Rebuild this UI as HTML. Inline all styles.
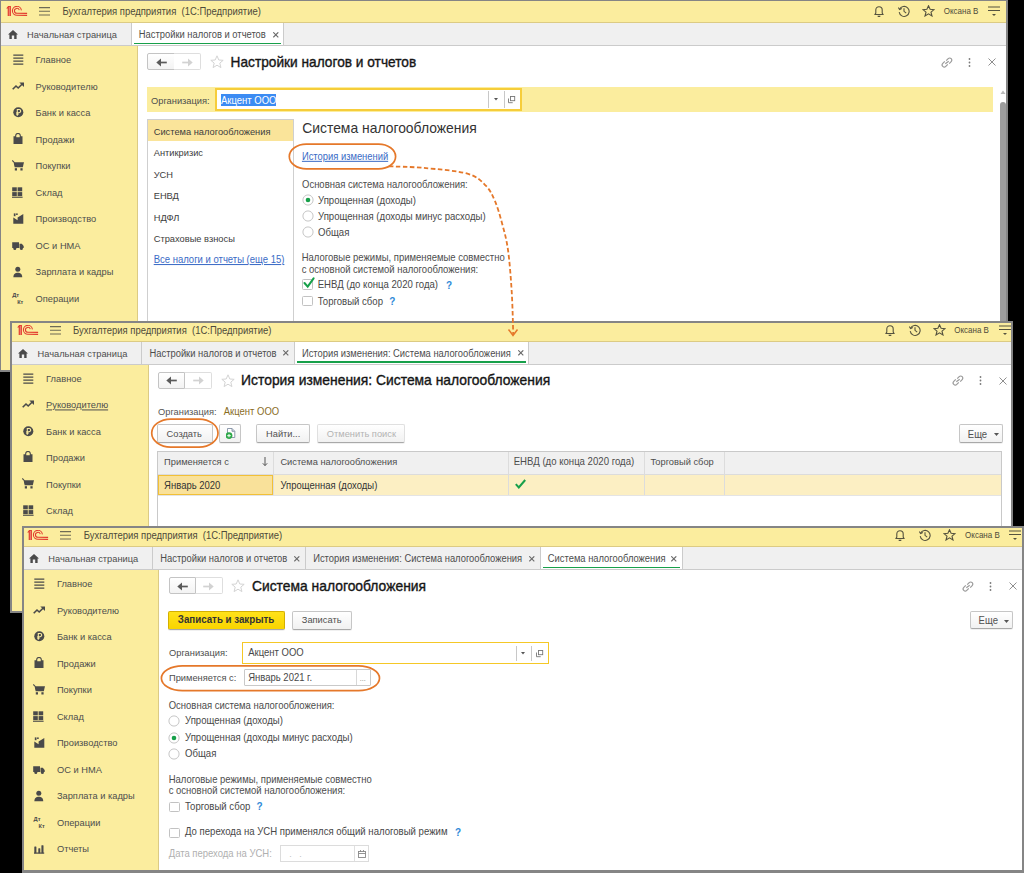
<!DOCTYPE html>
<html><head><meta charset="utf-8"><title>1C</title>
<style>
html,body{margin:0;padding:0;background:#000;width:1024px;height:873px;overflow:hidden;}
body{position:relative;font-family:"Liberation Sans", sans-serif;}
.win{position:absolute;overflow:hidden;background:#fff;}
.win div,.win svg,body>svg{position:absolute;}
.t{white-space:nowrap;}
</style></head><body>
<div class="win" style="left:0px;top:0px;width:1008px;height:372px"><div style="left:-50.00px;top:-50.00px;width:1200.00px;height:1000.00px;background:#fff"></div><div style="left:-50.00px;top:-50.00px;width:1200.00px;height:72.00px;background:#fbed9e"></div><div style="left:-50.00px;top:22.00px;width:1200.00px;height:1.00px;background:#dccb84"></div><div style="left:-50.00px;top:23.00px;width:1200.00px;height:22.00px;background:#f0f0f0"></div><div style="left:-50.00px;top:45.00px;width:1200.00px;height:1.00px;background:#cbcbcb"></div><div style="left:-50.00px;top:46.00px;width:187.00px;height:1000.00px;background:#fbed9e"></div><div style="left:137.00px;top:46.00px;width:1.00px;height:1000.00px;background:#dccb84"></div><svg style="left:6.00px;top:6.00px" width="22" height="11" viewBox="0 0 22 11"><path fill="#e2392d" d="M0.2 2.4 L2.1 0 L4.9 0 L4.9 9.9 L1.7 9.9 L1.7 2.6 Z"/><path stroke="#f6b49a" stroke-width="0.7" d="M3.3 0.9 V9.9"/><g fill="none" stroke="#e2392d" stroke-width="1.05"><path d="M15.4 4.35 A4.5 4.5 0 1 0 10.9 9.35 L21.1 9.35"/><path d="M13.3 4.05 A2.5 2.5 0 1 0 10.9 7.35 L21.1 7.35"/></g></svg><svg style="left:39.00px;top:7.00px" width="11" height="9" viewBox="0 0 11 9"><g stroke="#6e6b55" stroke-width="1.1"><path d="M0 0.6H11M0 4.3H11M0 8H11"/></g></svg><svg style="left:873.00px;top:5.00px" width="12" height="12" viewBox="0 0 12 12"><g fill="none" stroke="#55533f" stroke-width="1.1"><path d="M2 9.5 L2.8 8 L2.8 5 A3.2 3.2 0 0 1 9.2 5 L9.2 8 L10 9.5 Z"/><path d="M4.8 10.8 A1.3 1.3 0 0 0 7.2 10.8"/></g></svg><svg style="left:898.00px;top:5.00px" width="12" height="12" viewBox="0 0 12 12"><g fill="none" stroke="#55533f" stroke-width="1.1"><path d="M1.6 4.3 A5 5 0 1 1 1.2 7.2"/><path d="M6 3.2 V6.3 L8.2 8.2"/><path d="M0.3 2.5 L1.6 4.6 L3.8 3.6"/></g></svg><svg style="left:922.00px;top:5.00px" width="13" height="12" viewBox="0 0 13 12"><path fill="none" stroke="#55533f" stroke-width="1.1" d="M6.5 0.8 L8.1 4.3 L12 4.6 L9 7.1 L10 11 L6.5 8.9 L3 11 L4 7.1 L1 4.6 L4.9 4.3 Z"/></svg><svg style="left:988.00px;top:5.00px" width="12" height="12" viewBox="0 0 12 12"><g stroke="#55533f" stroke-width="1.1"><path d="M0 2H12M0 5.5H12"/></g><path fill="#55533f" d="M4 9 H8 L6 11 Z"/></svg><svg style="left:7.80px;top:30.00px" width="10" height="9" viewBox="0 0 10 9"><path fill="#4a4a4a" d="M5 0 L10 4.6 L8.6 4.6 L8.6 9 L6.2 9 L6.2 5.6 L3.8 5.6 L3.8 9 L1.4 9 L1.4 4.6 L0 4.6 Z"/></svg><div style="left:132.00px;top:23.00px;width:151.00px;height:22.00px;background:#fff"></div><div style="left:134.00px;top:42.60px;width:147.00px;height:1.60px;background:#17a04a"></div><div style="left:131.00px;top:23.00px;width:1.00px;height:22.00px;background:#cbcbcb"></div><div style="left:283.00px;top:23.00px;width:1.00px;height:22.00px;background:#cbcbcb"></div><svg style="left:272.50px;top:31.90px" width="6" height="6" viewBox="0 0 6 6"><path stroke="#6a6a6a" stroke-width="1.1" d="M0.3 0.3 L5.3 5.3 M5.3 0.3 L0.3 5.3"/></svg><svg style="left:12.50px;top:54.00px" width="11" height="11" viewBox="0 0 11 11"><g stroke="#4a4a4a" stroke-width="1.25"><path d="M0.3 1.2H10.3M0.3 4.1H10.3M0.3 7.1H10.3M0.3 10.1H10.3"/></g></svg><svg style="left:11.80px;top:81.50px" width="13" height="9" viewBox="0 0 13 9"><path fill="none" stroke="#4a4a4a" stroke-width="1.6" d="M0.7 7.3 L4 4 L6.2 6 L10 2.3"/><path fill="#4a4a4a" d="M7.3 0.4 L12 0.4 L12 5.1 Z"/></svg><svg style="left:12.50px;top:107.40px" width="11" height="11" viewBox="0 0 11 11"><circle cx="5.3" cy="5.3" r="5" fill="#4a4a4a"/><path fill="none" stroke="#fbed9e" stroke-width="1.1" d="M4.3 8.8 V2.5 H6.1 A1.6 1.6 0 0 1 6.1 5.7 H3.2 M3.2 7.1 H5.6"/></svg><svg style="left:12.70px;top:132.90px" width="10" height="12" viewBox="0 0 10 12"><path fill="#4a4a4a" d="M0.5 3.3 H2.6 L3.3 4.3 H6.7 L7.4 3.3 H9.5 V11 H0.5 Z"/><path fill="none" stroke="#4a4a4a" stroke-width="1.1" d="M2.7 4.6 V2.6 A2.3 2.2 0 0 1 7.3 2.6 V4.6"/></svg><svg style="left:11.70px;top:159.90px" width="13" height="11" viewBox="0 0 13 11"><path fill="#4a4a4a" d="M2 2.2 H12 L10.8 7.2 H3.2 Z"/><path fill="none" stroke="#4a4a4a" stroke-width="1.1" d="M0.3 0.5 L2.2 2.4 L3.2 7.2"/><rect x="2.8" y="8.2" width="2.2" height="2.3" fill="#4a4a4a"/><rect x="8.4" y="8.2" width="2.2" height="2.3" fill="#4a4a4a"/></svg><svg style="left:12.10px;top:186.60px" width="11" height="11" viewBox="0 0 11 11"><g fill="#4a4a4a"><rect x="0.2" y="0.3" width="4.6" height="4"/><rect x="5.6" y="0.3" width="4.6" height="4"/><rect x="0.2" y="5.1" width="4.6" height="4"/><rect x="5.6" y="5.1" width="4.6" height="4"/><rect x="0" y="9.7" width="10.6" height="1.1"/></g></svg><svg style="left:12.50px;top:213.00px" width="11" height="11" viewBox="0 0 11 11"><path fill="#4a4a4a" d="M0.3 10.7 V4.6 L4.6 7.3 V4.6 L10.3 1 V10.7 Z"/><rect x="0.8" y="0.4" width="1.7" height="2.8" fill="#4a4a4a"/><rect x="3.1" y="0.4" width="1.6" height="1.6" fill="#4a4a4a"/></svg><svg style="left:12.00px;top:241.50px" width="12" height="9" viewBox="0 0 12 9"><path fill="#4a4a4a" d="M0.2 0.2 H7 V6 H0.2 Z M7.5 1.8 H9.8 L11.7 4 V6 H7.5 Z"/><circle cx="2.8" cy="6.6" r="1.5" fill="#4a4a4a"/><circle cx="9.4" cy="6.6" r="1.5" fill="#4a4a4a"/></svg><svg style="left:13.00px;top:266.00px" width="10" height="12" viewBox="0 0 10 12"><circle cx="4.8" cy="3.2" r="2.5" fill="#4a4a4a"/><path fill="#4a4a4a" d="M0.4 11.3 C0.4 7.8 2.5 6.8 4.8 6.8 C7.1 6.8 9.2 7.8 9.2 11.3 Z"/></svg><div style="left:147.30px;top:53.30px;width:27.50px;height:17.20px;background:linear-gradient(#fff,#f3f3f3);border:1px solid #c4c4c4;box-sizing:border-box;border-radius:2px 0 0 2px"></div><div style="left:174.30px;top:53.30px;width:27.10px;height:17.20px;background:#fff;border:1px solid #dedede;border-left:none;box-sizing:border-box;border-radius:0 2px 2px 0"></div><svg style="left:155.50px;top:57.50px" width="11" height="9" viewBox="0 0 11 9"><path fill="none" stroke="#5a5a5a" stroke-width="1.7" d="M10.8 4.5 H2.5"/><path fill="#5a5a5a" d="M0.3 4.5 L5 0.6 L5 8.4 Z"/></svg><svg style="left:182.00px;top:57.50px" width="11" height="9" viewBox="0 0 11 9"><path fill="none" stroke="#d2d2d2" stroke-width="1.7" d="M0.2 4.5 H8.5"/><path fill="#d2d2d2" d="M10.7 4.5 L6 0.6 L6 8.4 Z"/></svg><svg style="left:210.00px;top:55.00px" width="14" height="14" viewBox="0 0 14 14"><path fill="none" stroke="#d4d4d4" stroke-width="1" d="M7 0.8 L8.8 5 L13.2 5.3 L9.8 8.1 L10.9 12.6 L7 10.2 L3.1 12.6 L4.2 8.1 L0.8 5.3 L5.2 5 Z"/></svg><svg style="left:941.00px;top:56.50px" width="12" height="11" viewBox="0 0 12 11"><g fill="none" stroke="#9a9a9a" stroke-width="1.2"><path d="M5.2 3.6 L7.2 1.6 A2 2 0 0 1 10.2 4.6 L8.2 6.6"/><path d="M6.8 7.4 L4.8 9.4 A2 2 0 0 1 1.8 6.4 L3.8 4.4"/><path d="M4.3 6.8 L7.7 4.2"/></g></svg><svg style="left:968.00px;top:57.50px" width="3" height="9" viewBox="0 0 3 9"><g fill="#7a7a7a"><circle cx="1.5" cy="1" r="0.9"/><circle cx="1.5" cy="4.5" r="0.9"/><circle cx="1.5" cy="8" r="0.9"/></g></svg><svg style="left:988.00px;top:58.00px" width="8" height="8" viewBox="0 0 8 8"><path stroke="#8f8f8f" stroke-width="1" d="M0.5 0.5 L7.5 7.5 M7.5 0.5 L0.5 7.5"/></svg><svg style="left:1000.00px;top:90.00px" width="6" height="5" viewBox="0 0 6 5"><path fill="#bbb" d="M3 0.5 L5.5 4 H0.5 Z"/></svg><div style="left:999.50px;top:101.50px;width:6.50px;height:400.00px;background:#9c9c9c;border-radius:3px"></div><div style="left:147.00px;top:87.00px;width:845.50px;height:25.00px;background:#fbed9e"></div><div style="left:215.00px;top:87.50px;width:307.00px;height:23.80px;background:#fff;border:2.2px solid #f6cd3a;box-sizing:border-box"></div><div style="left:220.60px;top:94.20px;width:55.60px;height:11.80px;background:#3b8bf3"></div><div style="left:488.00px;top:91.00px;width:1.00px;height:17.00px;background:#c8c8c8"></div><div style="left:503.50px;top:91.00px;width:1.00px;height:17.00px;background:#c8c8c8"></div><svg style="left:493.50px;top:98.30px" width="4" height="3" viewBox="0 0 4 3"><path fill="#555" d="M0 0 H4 L2 2.5 Z"/></svg><svg style="left:508.00px;top:96.00px" width="8" height="8" viewBox="0 0 8 8"><g fill="none" stroke="#777" stroke-width="0.9"><rect x="2.5" y="0.5" width="4.2" height="4.2"/><path d="M0.5 2.5 V6.7 H4.7"/></g></svg><div style="left:147.30px;top:119.30px;width:146.50px;height:400.00px;border:1px solid #cfcfcf;box-sizing:border-box;background:#fff"></div><div style="left:148.30px;top:120.30px;width:144.50px;height:21.00px;background:#fae49a"></div><svg style="left:301.50px;top:193.80px" width="12" height="12" viewBox="0 0 12 12"><circle cx="6" cy="6" r="5.1" fill="#fff" stroke="#c6c6c6" stroke-width="1"/><circle cx="6" cy="6" r="2.3" fill="#17a04a"/></svg><svg style="left:301.50px;top:210.10px" width="12" height="12" viewBox="0 0 12 12"><circle cx="6" cy="6" r="5.1" fill="#fff" stroke="#c6c6c6" stroke-width="1"/></svg><svg style="left:301.50px;top:226.40px" width="12" height="12" viewBox="0 0 12 12"><circle cx="6" cy="6" r="5.1" fill="#fff" stroke="#c6c6c6" stroke-width="1"/></svg><div style="left:302.30px;top:279.30px;width:10.50px;height:10.50px;border:1px solid #c2c2c2;box-sizing:border-box;border-radius:1.5px;background:#fff"></div><svg style="left:301.80px;top:277.30px" width="14" height="13" viewBox="0 0 14 13"><path fill="none" stroke="#17a04a" stroke-width="2" stroke-linecap="round" d="M2.5 6 L5.7 9.6 L11.6 1.3"/></svg><div style="left:302.30px;top:295.70px;width:10.50px;height:10.50px;border:1px solid #c2c2c2;box-sizing:border-box;border-radius:1.5px;background:#fff"></div><svg width="1008" height="372" font-family="Liberation Sans, sans-serif" xml:space="preserve" style="left:0;top:0;white-space:pre"><text transform="translate(62.50,15.20) scale(0.9346,1)" font-size="10.14" fill="#4d4a3a" font-weight="normal">Бухгалтерия предприятия &#160;(1С:Предприятие)</text><text transform="translate(943.80,14.00) scale(0.9346,1)" font-size="8.56" fill="#4d4a3a" font-weight="normal">Оксана В</text><text transform="translate(27.00,38.30) scale(0.9346,1)" font-size="9.95" fill="#4d4d4d" font-weight="normal">Начальная страница</text><text transform="translate(138.80,38.30) scale(0.9346,1)" font-size="10.04" fill="#4d4d4d" font-weight="normal">Настройки налогов и отчетов</text><text transform="translate(35.60,63.40) scale(0.9346,1)" font-size="9.95" fill="#4d4d4d" font-weight="normal">Главное</text><text transform="translate(35.60,89.90) scale(0.9346,1)" font-size="9.95" fill="#4d4d4d" font-weight="normal">Руководителю</text><text transform="translate(35.60,116.40) scale(0.9346,1)" font-size="9.95" fill="#4d4d4d" font-weight="normal">Банк и касса</text><text transform="translate(35.60,142.90) scale(0.9346,1)" font-size="9.95" fill="#4d4d4d" font-weight="normal">Продажи</text><text transform="translate(35.60,169.40) scale(0.9346,1)" font-size="9.95" fill="#4d4d4d" font-weight="normal">Покупки</text><text transform="translate(35.60,195.90) scale(0.9346,1)" font-size="9.95" fill="#4d4d4d" font-weight="normal">Склад</text><text transform="translate(35.60,222.40) scale(0.9346,1)" font-size="9.95" fill="#4d4d4d" font-weight="normal">Производство</text><text transform="translate(35.60,248.90) scale(0.9346,1)" font-size="9.95" fill="#4d4d4d" font-weight="normal">ОС и НМА</text><text transform="translate(35.60,275.40) scale(0.9346,1)" font-size="9.95" fill="#4d4d4d" font-weight="normal">Зарплата и кадры</text><text transform="translate(35.60,301.90) scale(0.9346,1)" font-size="9.95" fill="#4d4d4d" font-weight="normal">Операции</text><text transform="translate(12.20,297.30) scale(0.9346,1)" font-size="6.21" fill="#4a4a4a" font-weight="bold">Дт</text><text transform="translate(17.20,303.80) scale(0.9346,1)" font-size="5.99" fill="#4a4a4a" font-weight="bold">Кт</text><text transform="translate(230.60,66.80) scale(0.9804,1)" font-size="13.97" fill="#151515" font-weight="normal" stroke="#151515" stroke-width="0.35">Настройки налогов и отчетов</text><text transform="translate(151.00,103.50) scale(0.9346,1)" font-size="9.95" fill="#4d4d4d" font-weight="normal">Организация:</text><text transform="translate(221.00,103.80) scale(0.9346,1)" font-size="10.17" fill="#fff" font-weight="normal">Акцент ООО</text><text transform="translate(153.70,134.70) scale(0.9346,1)" font-size="9.95" fill="#3d3d3d" font-weight="normal">Система налогообложения</text><text transform="translate(153.70,156.20) scale(0.9346,1)" font-size="9.95" fill="#3d3d3d" font-weight="normal">Антикризис</text><text transform="translate(153.70,177.70) scale(0.9346,1)" font-size="9.95" fill="#3d3d3d" font-weight="normal">УСН</text><text transform="translate(153.70,199.20) scale(0.9346,1)" font-size="9.95" fill="#3d3d3d" font-weight="normal">ЕНВД</text><text transform="translate(153.70,220.70) scale(0.9346,1)" font-size="9.95" fill="#3d3d3d" font-weight="normal">НДФЛ</text><text transform="translate(153.70,242.20) scale(0.9346,1)" font-size="9.95" fill="#3d3d3d" font-weight="normal">Страховые взносы</text><text transform="translate(153.70,263.00) scale(0.9346,1)" font-size="10.17" fill="#3a6bc6" font-weight="normal" text-decoration="underline">Все налоги и отчеты (еще 15)</text><text transform="translate(302.20,132.80) scale(1.0000,1)" font-size="13.90" fill="#333" font-weight="normal">Система налогообложения</text><text transform="translate(301.90,159.80) scale(0.9346,1)" font-size="10.06" fill="#3a6bc6" font-weight="normal" text-decoration="underline">История изменений</text><text transform="translate(302.00,188.20) scale(0.9346,1)" font-size="10.17" fill="#4d4d4d" font-weight="normal">Основная система налогообложения:</text><text transform="translate(318.00,203.60) scale(0.9346,1)" font-size="10.27" fill="#484848" font-weight="normal">Упрощенная (доходы)</text><text transform="translate(318.00,219.90) scale(0.9346,1)" font-size="10.27" fill="#484848" font-weight="normal">Упрощенная (доходы минус расходы)</text><text transform="translate(318.00,236.20) scale(0.9346,1)" font-size="10.27" fill="#484848" font-weight="normal">Общая</text><text transform="translate(301.70,261.10) scale(0.9346,1)" font-size="10.17" fill="#4d4d4d" font-weight="normal">Налоговые режимы, применяемые совместно</text><text transform="translate(301.70,272.90) scale(0.9346,1)" font-size="10.17" fill="#4d4d4d" font-weight="normal">с основной системой налогообложения:</text><text transform="translate(317.70,288.10) scale(0.9346,1)" font-size="10.27" fill="#484848" font-weight="normal">ЕНВД (до конца 2020 года)</text><text transform="translate(446.00,288.50) scale(0.9346,1)" font-size="10.70" fill="#2f8ad8" font-weight="bold">?</text><text transform="translate(317.70,304.50) scale(0.9346,1)" font-size="10.27" fill="#484848" font-weight="normal">Торговый сбор</text><text transform="translate(389.30,304.80) scale(0.9346,1)" font-size="10.70" fill="#2f8ad8" font-weight="bold">?</text></svg><div style="left:0;top:0;width:1008px;height:372px;box-sizing:border-box;border-style:solid;border-color:#858585;border-width:1.5px 2px 2px 1px"></div></div><div class="win" style="left:10px;top:321px;width:1003px;height:292px"><div style="left:-49.50px;top:-52.50px;width:1200.00px;height:1000.00px;background:#fff"></div><div style="left:-49.50px;top:-52.50px;width:1200.00px;height:72.00px;background:#fbed9e"></div><div style="left:-49.50px;top:19.50px;width:1200.00px;height:1.00px;background:#dccb84"></div><div style="left:-49.50px;top:20.50px;width:1200.00px;height:22.00px;background:#f0f0f0"></div><div style="left:-49.50px;top:42.50px;width:1200.00px;height:1.00px;background:#cbcbcb"></div><div style="left:-49.50px;top:43.50px;width:187.00px;height:1000.00px;background:#fbed9e"></div><div style="left:137.50px;top:43.50px;width:1.00px;height:1000.00px;background:#dccb84"></div><svg style="left:6.50px;top:3.50px" width="22" height="11" viewBox="0 0 22 11"><path fill="#e2392d" d="M0.2 2.4 L2.1 0 L4.9 0 L4.9 9.9 L1.7 9.9 L1.7 2.6 Z"/><path stroke="#f6b49a" stroke-width="0.7" d="M3.3 0.9 V9.9"/><g fill="none" stroke="#e2392d" stroke-width="1.05"><path d="M15.4 4.35 A4.5 4.5 0 1 0 10.9 9.35 L21.1 9.35"/><path d="M13.3 4.05 A2.5 2.5 0 1 0 10.9 7.35 L21.1 7.35"/></g></svg><svg style="left:39.50px;top:4.50px" width="11" height="9" viewBox="0 0 11 9"><g stroke="#6e6b55" stroke-width="1.1"><path d="M0 0.6H11M0 4.3H11M0 8H11"/></g></svg><svg style="left:873.50px;top:2.50px" width="12" height="12" viewBox="0 0 12 12"><g fill="none" stroke="#55533f" stroke-width="1.1"><path d="M2 9.5 L2.8 8 L2.8 5 A3.2 3.2 0 0 1 9.2 5 L9.2 8 L10 9.5 Z"/><path d="M4.8 10.8 A1.3 1.3 0 0 0 7.2 10.8"/></g></svg><svg style="left:898.50px;top:2.50px" width="12" height="12" viewBox="0 0 12 12"><g fill="none" stroke="#55533f" stroke-width="1.1"><path d="M1.6 4.3 A5 5 0 1 1 1.2 7.2"/><path d="M6 3.2 V6.3 L8.2 8.2"/><path d="M0.3 2.5 L1.6 4.6 L3.8 3.6"/></g></svg><svg style="left:922.50px;top:2.50px" width="13" height="12" viewBox="0 0 13 12"><path fill="none" stroke="#55533f" stroke-width="1.1" d="M6.5 0.8 L8.1 4.3 L12 4.6 L9 7.1 L10 11 L6.5 8.9 L3 11 L4 7.1 L1 4.6 L4.9 4.3 Z"/></svg><svg style="left:988.50px;top:2.50px" width="12" height="12" viewBox="0 0 12 12"><g stroke="#55533f" stroke-width="1.1"><path d="M0 2H12M0 5.5H12"/></g><path fill="#55533f" d="M4 9 H8 L6 11 Z"/></svg><svg style="left:8.30px;top:27.50px" width="10" height="9" viewBox="0 0 10 9"><path fill="#4a4a4a" d="M5 0 L10 4.6 L8.6 4.6 L8.6 9 L6.2 9 L6.2 5.6 L3.8 5.6 L3.8 9 L1.4 9 L1.4 4.6 L0 4.6 Z"/></svg><div style="left:130.70px;top:20.50px;width:1.00px;height:22.00px;background:#cbcbcb"></div><div style="left:284.00px;top:20.50px;width:1.00px;height:22.00px;background:#cbcbcb"></div><svg style="left:273.30px;top:29.40px" width="6" height="6" viewBox="0 0 6 6"><path stroke="#6a6a6a" stroke-width="1.1" d="M0.3 0.3 L5.3 5.3 M5.3 0.3 L0.3 5.3"/></svg><div style="left:284.50px;top:20.50px;width:233.60px;height:22.00px;background:#fff"></div><div style="left:286.50px;top:40.10px;width:229.60px;height:1.60px;background:#17a04a"></div><div style="left:283.50px;top:20.50px;width:1.00px;height:22.00px;background:#cbcbcb"></div><div style="left:518.10px;top:20.50px;width:1.00px;height:22.00px;background:#cbcbcb"></div><svg style="left:508.00px;top:29.40px" width="6" height="6" viewBox="0 0 6 6"><path stroke="#6a6a6a" stroke-width="1.1" d="M0.3 0.3 L5.3 5.3 M5.3 0.3 L0.3 5.3"/></svg><svg style="left:13.00px;top:51.50px" width="11" height="11" viewBox="0 0 11 11"><g stroke="#4a4a4a" stroke-width="1.25"><path d="M0.3 1.2H10.3M0.3 4.1H10.3M0.3 7.1H10.3M0.3 10.1H10.3"/></g></svg><svg style="left:12.30px;top:79.00px" width="13" height="9" viewBox="0 0 13 9"><path fill="none" stroke="#4a4a4a" stroke-width="1.6" d="M0.7 7.3 L4 4 L6.2 6 L10 2.3"/><path fill="#4a4a4a" d="M7.3 0.4 L12 0.4 L12 5.1 Z"/></svg><svg style="left:13.00px;top:104.90px" width="11" height="11" viewBox="0 0 11 11"><circle cx="5.3" cy="5.3" r="5" fill="#4a4a4a"/><path fill="none" stroke="#fbed9e" stroke-width="1.1" d="M4.3 8.8 V2.5 H6.1 A1.6 1.6 0 0 1 6.1 5.7 H3.2 M3.2 7.1 H5.6"/></svg><svg style="left:13.20px;top:130.40px" width="10" height="12" viewBox="0 0 10 12"><path fill="#4a4a4a" d="M0.5 3.3 H2.6 L3.3 4.3 H6.7 L7.4 3.3 H9.5 V11 H0.5 Z"/><path fill="none" stroke="#4a4a4a" stroke-width="1.1" d="M2.7 4.6 V2.6 A2.3 2.2 0 0 1 7.3 2.6 V4.6"/></svg><svg style="left:12.20px;top:157.40px" width="13" height="11" viewBox="0 0 13 11"><path fill="#4a4a4a" d="M2 2.2 H12 L10.8 7.2 H3.2 Z"/><path fill="none" stroke="#4a4a4a" stroke-width="1.1" d="M0.3 0.5 L2.2 2.4 L3.2 7.2"/><rect x="2.8" y="8.2" width="2.2" height="2.3" fill="#4a4a4a"/><rect x="8.4" y="8.2" width="2.2" height="2.3" fill="#4a4a4a"/></svg><svg style="left:12.60px;top:184.10px" width="11" height="11" viewBox="0 0 11 11"><g fill="#4a4a4a"><rect x="0.2" y="0.3" width="4.6" height="4"/><rect x="5.6" y="0.3" width="4.6" height="4"/><rect x="0.2" y="5.1" width="4.6" height="4"/><rect x="5.6" y="5.1" width="4.6" height="4"/><rect x="0" y="9.7" width="10.6" height="1.1"/></g></svg><svg style="left:13.00px;top:210.50px" width="11" height="11" viewBox="0 0 11 11"><path fill="#4a4a4a" d="M0.3 10.7 V4.6 L4.6 7.3 V4.6 L10.3 1 V10.7 Z"/><rect x="0.8" y="0.4" width="1.7" height="2.8" fill="#4a4a4a"/><rect x="3.1" y="0.4" width="1.6" height="1.6" fill="#4a4a4a"/></svg><div style="left:147.80px;top:50.80px;width:27.50px;height:17.20px;background:linear-gradient(#fff,#f3f3f3);border:1px solid #c4c4c4;box-sizing:border-box;border-radius:2px 0 0 2px"></div><div style="left:174.80px;top:50.80px;width:27.10px;height:17.20px;background:#fff;border:1px solid #dedede;border-left:none;box-sizing:border-box;border-radius:0 2px 2px 0"></div><svg style="left:156.00px;top:55.00px" width="11" height="9" viewBox="0 0 11 9"><path fill="none" stroke="#5a5a5a" stroke-width="1.7" d="M10.8 4.5 H2.5"/><path fill="#5a5a5a" d="M0.3 4.5 L5 0.6 L5 8.4 Z"/></svg><svg style="left:182.50px;top:55.00px" width="11" height="9" viewBox="0 0 11 9"><path fill="none" stroke="#d2d2d2" stroke-width="1.7" d="M0.2 4.5 H8.5"/><path fill="#d2d2d2" d="M10.7 4.5 L6 0.6 L6 8.4 Z"/></svg><svg style="left:210.50px;top:52.50px" width="14" height="14" viewBox="0 0 14 14"><path fill="none" stroke="#d4d4d4" stroke-width="1" d="M7 0.8 L8.8 5 L13.2 5.3 L9.8 8.1 L10.9 12.6 L7 10.2 L3.1 12.6 L4.2 8.1 L0.8 5.3 L5.2 5 Z"/></svg><svg style="left:941.50px;top:54.00px" width="12" height="11" viewBox="0 0 12 11"><g fill="none" stroke="#9a9a9a" stroke-width="1.2"><path d="M5.2 3.6 L7.2 1.6 A2 2 0 0 1 10.2 4.6 L8.2 6.6"/><path d="M6.8 7.4 L4.8 9.4 A2 2 0 0 1 1.8 6.4 L3.8 4.4"/><path d="M4.3 6.8 L7.7 4.2"/></g></svg><svg style="left:968.50px;top:55.00px" width="3" height="9" viewBox="0 0 3 9"><g fill="#7a7a7a"><circle cx="1.5" cy="1" r="0.9"/><circle cx="1.5" cy="4.5" r="0.9"/><circle cx="1.5" cy="8" r="0.9"/></g></svg><svg style="left:988.50px;top:55.50px" width="8" height="8" viewBox="0 0 8 8"><path stroke="#8f8f8f" stroke-width="1" d="M0.5 0.5 L7.5 7.5 M7.5 0.5 L0.5 7.5"/></svg><div style="left:147.00px;top:103.30px;width:56.10px;height:18.80px;background:linear-gradient(#fff,#f1f1f1);border:1px solid #c6c6c6;border-bottom-color:#a9a9a9;box-sizing:border-box;border-radius:2px;box-shadow:0 1px 0 rgba(0,0,0,0.06)"></div><div style="left:209.40px;top:103.30px;width:21.60px;height:18.80px;background:linear-gradient(#fff,#f1f1f1);border:1px solid #c6c6c6;border-bottom-color:#a9a9a9;box-sizing:border-box;border-radius:2px;box-shadow:0 1px 0 rgba(0,0,0,0.06)"></div><svg style="left:215.50px;top:106.50px" width="11" height="12" viewBox="0 0 11 12"><path fill="#fff" stroke="#8290a4" stroke-width="0.9" d="M1.5 0.5 H6 L8.8 3.3 V9.5 H1.5 Z"/><path fill="#c8d0dc" stroke="#8290a4" stroke-width="0.9" d="M6 0.5 V3.3 H8.8"/><circle cx="3" cy="7.6" r="3.4" fill="#2ea84a"/><path stroke="#e8f5e9" stroke-width="1.1" d="M3 5.9 V9.3 M1.3 7.6 H4.7"/></svg><div style="left:246.30px;top:103.30px;width:53.50px;height:18.80px;background:linear-gradient(#fff,#f1f1f1);border:1px solid #c6c6c6;border-bottom-color:#a9a9a9;box-sizing:border-box;border-radius:2px;box-shadow:0 1px 0 rgba(0,0,0,0.06)"></div><div style="left:307.30px;top:103.30px;width:88.00px;height:18.80px;background:linear-gradient(#fff,#f1f1f1);border:1px solid #e0e0e0;border-bottom-color:#a9a9a9;box-sizing:border-box;border-radius:2px;box-shadow:0 1px 0 rgba(0,0,0,0.06)"></div><div style="left:948.50px;top:103.30px;width:44.20px;height:19.00px;background:linear-gradient(#fff,#f1f1f1);border:1px solid #c6c6c6;border-bottom-color:#a9a9a9;box-sizing:border-box;border-radius:2px;box-shadow:0 1px 0 rgba(0,0,0,0.06)"></div><svg style="left:983.50px;top:112.00px" width="5" height="3" viewBox="0 0 5 3"><path fill="#555" d="M0 0 H5 L2.5 3 Z"/></svg><div style="left:147.30px;top:129.90px;width:845.00px;height:200.00px;border:1px solid #c9c9c9;box-sizing:border-box;background:#fff"></div><div style="left:148.30px;top:130.90px;width:843.00px;height:22.00px;background:#f0f0f0"></div><div style="left:148.30px;top:152.90px;width:843.00px;height:1.00px;background:#dcdcdc"></div><div style="left:148.30px;top:153.90px;width:843.00px;height:20.00px;background:#fcefc3"></div><div style="left:148.30px;top:173.70px;width:843.00px;height:1.00px;background:#e4e4e4"></div><div style="left:263.00px;top:130.90px;width:1.00px;height:43.00px;background:#dcdcdc"></div><div style="left:497.70px;top:130.90px;width:1.00px;height:43.00px;background:#dcdcdc"></div><div style="left:634.40px;top:130.90px;width:1.00px;height:43.00px;background:#dcdcdc"></div><div style="left:713.70px;top:130.90px;width:1.00px;height:43.00px;background:#dcdcdc"></div><div style="left:148.30px;top:153.70px;width:115.20px;height:20.20px;background:#f9e19a;border:1.3px solid #f2c037;box-sizing:border-box"></div><svg style="left:252.00px;top:136.00px" width="6" height="10" viewBox="0 0 6 10"><path fill="none" stroke="#555" stroke-width="1" d="M3 0 V8.5 M0.8 6.3 L3 8.6 L5.2 6.3"/></svg><svg style="left:505.00px;top:157.50px" width="11" height="10" viewBox="0 0 11 10"><path fill="none" stroke="#17a04a" stroke-width="2" d="M0.8 5.2 L3.8 8.5 L10.2 1"/></svg><svg width="1003" height="292" font-family="Liberation Sans, sans-serif" xml:space="preserve" style="left:0;top:0;white-space:pre"><text transform="translate(63.00,12.70) scale(0.9346,1)" font-size="10.14" fill="#4d4a3a" font-weight="normal">Бухгалтерия предприятия &#160;(1С:Предприятие)</text><text transform="translate(944.30,11.50) scale(0.9346,1)" font-size="8.56" fill="#4d4a3a" font-weight="normal">Оксана В</text><text transform="translate(27.50,35.80) scale(0.9346,1)" font-size="9.95" fill="#4d4d4d" font-weight="normal">Начальная страница</text><text transform="translate(139.50,35.80) scale(0.9346,1)" font-size="10.04" fill="#4d4d4d" font-weight="normal">Настройки налогов и отчетов</text><text transform="translate(291.90,35.80) scale(0.9346,1)" font-size="10.04" fill="#4d4d4d" font-weight="normal">История изменения: Система налогообложения</text><text transform="translate(36.10,60.90) scale(0.9346,1)" font-size="9.95" fill="#4d4d4d" font-weight="normal">Главное</text><text transform="translate(36.10,87.40) scale(0.9346,1)" font-size="9.95" fill="#4d4d4d" font-weight="normal" text-decoration="underline">Руководителю</text><text transform="translate(36.10,113.90) scale(0.9346,1)" font-size="9.95" fill="#4d4d4d" font-weight="normal">Банк и касса</text><text transform="translate(36.10,140.40) scale(0.9346,1)" font-size="9.95" fill="#4d4d4d" font-weight="normal">Продажи</text><text transform="translate(36.10,166.90) scale(0.9346,1)" font-size="9.95" fill="#4d4d4d" font-weight="normal">Покупки</text><text transform="translate(36.10,193.40) scale(0.9346,1)" font-size="9.95" fill="#4d4d4d" font-weight="normal">Склад</text><text transform="translate(36.10,219.90) scale(0.9346,1)" font-size="9.95" fill="#4d4d4d" font-weight="normal">Производство</text><text transform="translate(231.10,64.30) scale(0.9804,1)" font-size="14.14" fill="#151515" font-weight="normal" stroke="#151515" stroke-width="0.35">История изменения: Система налогообложения</text><text transform="translate(148.00,94.20) scale(0.9346,1)" font-size="9.95" fill="#555" font-weight="normal">Организация:</text><text transform="translate(213.70,94.20) scale(0.9346,1)" font-size="10.17" fill="#8a6d1f" font-weight="normal">Акцент ООО</text><text transform="translate(156.60,115.50) scale(0.9346,1)" font-size="9.95" fill="#505050" font-weight="normal">Создать</text><text transform="translate(256.00,115.50) scale(0.9346,1)" font-size="9.95" fill="#505050" font-weight="normal">Найти...</text><text transform="translate(316.80,115.50) scale(0.9346,1)" font-size="9.95" fill="#b3b3b3" font-weight="normal">Отменить поиск</text><text transform="translate(957.80,116.50) scale(0.9346,1)" font-size="10.17" fill="#505050" font-weight="normal">Еще</text><text transform="translate(154.10,144.20) scale(0.9346,1)" font-size="9.95" fill="#4d4d4d" font-weight="normal">Применяется с</text><text transform="translate(270.40,144.20) scale(0.9346,1)" font-size="9.95" fill="#4d4d4d" font-weight="normal">Система налогообложения</text><text transform="translate(503.70,144.20) scale(0.9346,1)" font-size="10.29" fill="#4d4d4d" font-weight="normal">ЕНВД (до конца 2020 года)</text><text transform="translate(640.40,144.20) scale(0.9346,1)" font-size="9.95" fill="#4d4d4d" font-weight="normal">Торговый сбор</text><text transform="translate(154.10,167.50) scale(0.9346,1)" font-size="10.17" fill="#333" font-weight="normal">Январь 2020</text><text transform="translate(270.40,167.50) scale(0.9346,1)" font-size="10.17" fill="#333" font-weight="normal">Упрощенная (доходы)</text></svg><div style="left:0;top:0;width:1003px;height:292px;box-sizing:border-box;border-style:solid;border-color:#858585;border-width:2px 2px 2px 2px"></div></div><div class="win" style="left:22px;top:526px;width:1002px;height:347px"><div style="left:-50.70px;top:-52.00px;width:1200.00px;height:1000.00px;background:#fff"></div><div style="left:-50.70px;top:-52.00px;width:1200.00px;height:72.00px;background:#fbed9e"></div><div style="left:-50.70px;top:20.00px;width:1200.00px;height:1.00px;background:#dccb84"></div><div style="left:-50.70px;top:21.00px;width:1200.00px;height:22.00px;background:#f0f0f0"></div><div style="left:-50.70px;top:43.00px;width:1200.00px;height:1.00px;background:#cbcbcb"></div><div style="left:-50.70px;top:44.00px;width:187.00px;height:1000.00px;background:#fbed9e"></div><div style="left:136.30px;top:44.00px;width:1.00px;height:1000.00px;background:#dccb84"></div><svg style="left:5.30px;top:4.00px" width="22" height="11" viewBox="0 0 22 11"><path fill="#e2392d" d="M0.2 2.4 L2.1 0 L4.9 0 L4.9 9.9 L1.7 9.9 L1.7 2.6 Z"/><path stroke="#f6b49a" stroke-width="0.7" d="M3.3 0.9 V9.9"/><g fill="none" stroke="#e2392d" stroke-width="1.05"><path d="M15.4 4.35 A4.5 4.5 0 1 0 10.9 9.35 L21.1 9.35"/><path d="M13.3 4.05 A2.5 2.5 0 1 0 10.9 7.35 L21.1 7.35"/></g></svg><svg style="left:38.30px;top:5.00px" width="11" height="9" viewBox="0 0 11 9"><g stroke="#6e6b55" stroke-width="1.1"><path d="M0 0.6H11M0 4.3H11M0 8H11"/></g></svg><svg style="left:872.30px;top:3.00px" width="12" height="12" viewBox="0 0 12 12"><g fill="none" stroke="#55533f" stroke-width="1.1"><path d="M2 9.5 L2.8 8 L2.8 5 A3.2 3.2 0 0 1 9.2 5 L9.2 8 L10 9.5 Z"/><path d="M4.8 10.8 A1.3 1.3 0 0 0 7.2 10.8"/></g></svg><svg style="left:897.30px;top:3.00px" width="12" height="12" viewBox="0 0 12 12"><g fill="none" stroke="#55533f" stroke-width="1.1"><path d="M1.6 4.3 A5 5 0 1 1 1.2 7.2"/><path d="M6 3.2 V6.3 L8.2 8.2"/><path d="M0.3 2.5 L1.6 4.6 L3.8 3.6"/></g></svg><svg style="left:921.30px;top:3.00px" width="13" height="12" viewBox="0 0 13 12"><path fill="none" stroke="#55533f" stroke-width="1.1" d="M6.5 0.8 L8.1 4.3 L12 4.6 L9 7.1 L10 11 L6.5 8.9 L3 11 L4 7.1 L1 4.6 L4.9 4.3 Z"/></svg><svg style="left:987.30px;top:3.00px" width="12" height="12" viewBox="0 0 12 12"><g stroke="#55533f" stroke-width="1.1"><path d="M0 2H12M0 5.5H12"/></g><path fill="#55533f" d="M4 9 H8 L6 11 Z"/></svg><svg style="left:7.10px;top:28.00px" width="10" height="9" viewBox="0 0 10 9"><path fill="#4a4a4a" d="M5 0 L10 4.6 L8.6 4.6 L8.6 9 L6.2 9 L6.2 5.6 L3.8 5.6 L3.8 9 L1.4 9 L1.4 4.6 L0 4.6 Z"/></svg><div style="left:130.00px;top:21.00px;width:1.00px;height:22.00px;background:#cbcbcb"></div><div style="left:283.10px;top:21.00px;width:1.00px;height:22.00px;background:#cbcbcb"></div><svg style="left:272.10px;top:29.90px" width="6" height="6" viewBox="0 0 6 6"><path stroke="#6a6a6a" stroke-width="1.1" d="M0.3 0.3 L5.3 5.3 M5.3 0.3 L0.3 5.3"/></svg><div style="left:283.10px;top:21.00px;width:1.00px;height:22.00px;background:#cbcbcb"></div><div style="left:517.80px;top:21.00px;width:1.00px;height:22.00px;background:#cbcbcb"></div><svg style="left:506.80px;top:29.90px" width="6" height="6" viewBox="0 0 6 6"><path stroke="#6a6a6a" stroke-width="1.1" d="M0.3 0.3 L5.3 5.3 M5.3 0.3 L0.3 5.3"/></svg><div style="left:518.80px;top:21.00px;width:141.50px;height:22.00px;background:#fff"></div><div style="left:520.80px;top:40.60px;width:137.50px;height:1.60px;background:#17a04a"></div><div style="left:517.80px;top:21.00px;width:1.00px;height:22.00px;background:#cbcbcb"></div><div style="left:660.30px;top:21.00px;width:1.00px;height:22.00px;background:#cbcbcb"></div><svg style="left:649.30px;top:29.90px" width="6" height="6" viewBox="0 0 6 6"><path stroke="#6a6a6a" stroke-width="1.1" d="M0.3 0.3 L5.3 5.3 M5.3 0.3 L0.3 5.3"/></svg><svg style="left:11.80px;top:52.00px" width="11" height="11" viewBox="0 0 11 11"><g stroke="#4a4a4a" stroke-width="1.25"><path d="M0.3 1.2H10.3M0.3 4.1H10.3M0.3 7.1H10.3M0.3 10.1H10.3"/></g></svg><svg style="left:11.10px;top:79.50px" width="13" height="9" viewBox="0 0 13 9"><path fill="none" stroke="#4a4a4a" stroke-width="1.6" d="M0.7 7.3 L4 4 L6.2 6 L10 2.3"/><path fill="#4a4a4a" d="M7.3 0.4 L12 0.4 L12 5.1 Z"/></svg><svg style="left:11.80px;top:105.40px" width="11" height="11" viewBox="0 0 11 11"><circle cx="5.3" cy="5.3" r="5" fill="#4a4a4a"/><path fill="none" stroke="#fbed9e" stroke-width="1.1" d="M4.3 8.8 V2.5 H6.1 A1.6 1.6 0 0 1 6.1 5.7 H3.2 M3.2 7.1 H5.6"/></svg><svg style="left:12.00px;top:130.90px" width="10" height="12" viewBox="0 0 10 12"><path fill="#4a4a4a" d="M0.5 3.3 H2.6 L3.3 4.3 H6.7 L7.4 3.3 H9.5 V11 H0.5 Z"/><path fill="none" stroke="#4a4a4a" stroke-width="1.1" d="M2.7 4.6 V2.6 A2.3 2.2 0 0 1 7.3 2.6 V4.6"/></svg><svg style="left:11.00px;top:157.90px" width="13" height="11" viewBox="0 0 13 11"><path fill="#4a4a4a" d="M2 2.2 H12 L10.8 7.2 H3.2 Z"/><path fill="none" stroke="#4a4a4a" stroke-width="1.1" d="M0.3 0.5 L2.2 2.4 L3.2 7.2"/><rect x="2.8" y="8.2" width="2.2" height="2.3" fill="#4a4a4a"/><rect x="8.4" y="8.2" width="2.2" height="2.3" fill="#4a4a4a"/></svg><svg style="left:11.40px;top:184.60px" width="11" height="11" viewBox="0 0 11 11"><g fill="#4a4a4a"><rect x="0.2" y="0.3" width="4.6" height="4"/><rect x="5.6" y="0.3" width="4.6" height="4"/><rect x="0.2" y="5.1" width="4.6" height="4"/><rect x="5.6" y="5.1" width="4.6" height="4"/><rect x="0" y="9.7" width="10.6" height="1.1"/></g></svg><svg style="left:11.80px;top:211.00px" width="11" height="11" viewBox="0 0 11 11"><path fill="#4a4a4a" d="M0.3 10.7 V4.6 L4.6 7.3 V4.6 L10.3 1 V10.7 Z"/><rect x="0.8" y="0.4" width="1.7" height="2.8" fill="#4a4a4a"/><rect x="3.1" y="0.4" width="1.6" height="1.6" fill="#4a4a4a"/></svg><svg style="left:11.30px;top:239.50px" width="12" height="9" viewBox="0 0 12 9"><path fill="#4a4a4a" d="M0.2 0.2 H7 V6 H0.2 Z M7.5 1.8 H9.8 L11.7 4 V6 H7.5 Z"/><circle cx="2.8" cy="6.6" r="1.5" fill="#4a4a4a"/><circle cx="9.4" cy="6.6" r="1.5" fill="#4a4a4a"/></svg><svg style="left:12.30px;top:264.00px" width="10" height="12" viewBox="0 0 10 12"><circle cx="4.8" cy="3.2" r="2.5" fill="#4a4a4a"/><path fill="#4a4a4a" d="M0.4 11.3 C0.4 7.8 2.5 6.8 4.8 6.8 C7.1 6.8 9.2 7.8 9.2 11.3 Z"/></svg><svg style="left:12.30px;top:319.00px" width="11" height="10" viewBox="0 0 11 10"><g fill="#4a4a4a"><rect x="0.3" y="1.5" width="2.1" height="6.8" rx="0.5"/><rect x="4.3" y="3.2" width="2" height="5.1" rx="0.5"/><rect x="7.4" y="0.2" width="2.1" height="8.1" rx="0.5"/><rect x="0" y="7.5" width="10.2" height="1.2"/></g></svg><div style="left:146.60px;top:51.30px;width:27.50px;height:17.20px;background:linear-gradient(#fff,#f3f3f3);border:1px solid #c4c4c4;box-sizing:border-box;border-radius:2px 0 0 2px"></div><div style="left:173.60px;top:51.30px;width:27.10px;height:17.20px;background:#fff;border:1px solid #dedede;border-left:none;box-sizing:border-box;border-radius:0 2px 2px 0"></div><svg style="left:154.80px;top:55.50px" width="11" height="9" viewBox="0 0 11 9"><path fill="none" stroke="#5a5a5a" stroke-width="1.7" d="M10.8 4.5 H2.5"/><path fill="#5a5a5a" d="M0.3 4.5 L5 0.6 L5 8.4 Z"/></svg><svg style="left:181.30px;top:55.50px" width="11" height="9" viewBox="0 0 11 9"><path fill="none" stroke="#d2d2d2" stroke-width="1.7" d="M0.2 4.5 H8.5"/><path fill="#d2d2d2" d="M10.7 4.5 L6 0.6 L6 8.4 Z"/></svg><svg style="left:209.30px;top:53.00px" width="14" height="14" viewBox="0 0 14 14"><path fill="none" stroke="#d4d4d4" stroke-width="1" d="M7 0.8 L8.8 5 L13.2 5.3 L9.8 8.1 L10.9 12.6 L7 10.2 L3.1 12.6 L4.2 8.1 L0.8 5.3 L5.2 5 Z"/></svg><svg style="left:940.30px;top:54.50px" width="12" height="11" viewBox="0 0 12 11"><g fill="none" stroke="#9a9a9a" stroke-width="1.2"><path d="M5.2 3.6 L7.2 1.6 A2 2 0 0 1 10.2 4.6 L8.2 6.6"/><path d="M6.8 7.4 L4.8 9.4 A2 2 0 0 1 1.8 6.4 L3.8 4.4"/><path d="M4.3 6.8 L7.7 4.2"/></g></svg><svg style="left:967.30px;top:55.50px" width="3" height="9" viewBox="0 0 3 9"><g fill="#7a7a7a"><circle cx="1.5" cy="1" r="0.9"/><circle cx="1.5" cy="4.5" r="0.9"/><circle cx="1.5" cy="8" r="0.9"/></g></svg><svg style="left:987.30px;top:56.00px" width="8" height="8" viewBox="0 0 8 8"><path stroke="#8f8f8f" stroke-width="1" d="M0.5 0.5 L7.5 7.5 M7.5 0.5 L0.5 7.5"/></svg><div style="left:146.20px;top:84.70px;width:116.60px;height:19.30px;background:linear-gradient(#ffe21a,#f9d400);border:1px solid #d4b000;border-bottom-color:#a9a9a9;box-sizing:border-box;border-radius:2px;box-shadow:0 1px 0 rgba(0,0,0,0.06)"></div><div style="left:270.10px;top:84.70px;width:59.50px;height:19.30px;background:linear-gradient(#fff,#f1f1f1);border:1px solid #c6c6c6;border-bottom-color:#a9a9a9;box-sizing:border-box;border-radius:2px;box-shadow:0 1px 0 rgba(0,0,0,0.06)"></div><div style="left:947.60px;top:85.30px;width:43.70px;height:18.00px;background:linear-gradient(#fff,#f1f1f1);border:1px solid #c6c6c6;border-bottom-color:#a9a9a9;box-sizing:border-box;border-radius:2px;box-shadow:0 1px 0 rgba(0,0,0,0.06)"></div><svg style="left:981.80px;top:94.00px" width="5" height="3" viewBox="0 0 5 3"><path fill="#555" d="M0 0 H5 L2.5 3 Z"/></svg><div style="left:220.30px;top:116.00px;width:306.80px;height:22.30px;background:#fff;border:1.6px solid #f5c826;box-sizing:border-box"></div><div style="left:493.60px;top:119.50px;width:1.00px;height:15.50px;background:#c8c8c8"></div><div style="left:509.30px;top:119.50px;width:1.00px;height:15.50px;background:#c8c8c8"></div><svg style="left:499.10px;top:126.30px" width="4" height="3" viewBox="0 0 4 3"><path fill="#555" d="M0 0 H4 L2 2.5 Z"/></svg><svg style="left:513.80px;top:123.50px" width="8" height="8" viewBox="0 0 8 8"><g fill="none" stroke="#777" stroke-width="0.9"><rect x="2.5" y="0.5" width="4.2" height="4.2"/><path d="M0.5 2.5 V6.7 H4.7"/></g></svg><div style="left:222.30px;top:142.90px;width:127.00px;height:17.60px;background:#fff;border:1px solid #c9c9c9;box-sizing:border-box;border-radius:1px"></div><div style="left:333.70px;top:143.90px;width:1.00px;height:15.60px;background:#d8d8d8"></div><svg style="left:146.00px;top:189.30px" width="12" height="12" viewBox="0 0 12 12"><circle cx="6" cy="6" r="5.1" fill="#fff" stroke="#c6c6c6" stroke-width="1"/></svg><svg style="left:146.00px;top:205.80px" width="12" height="12" viewBox="0 0 12 12"><circle cx="6" cy="6" r="5.1" fill="#fff" stroke="#c6c6c6" stroke-width="1"/><circle cx="6" cy="6" r="2.3" fill="#17a04a"/></svg><svg style="left:146.00px;top:222.00px" width="12" height="12" viewBox="0 0 12 12"><circle cx="6" cy="6" r="5.1" fill="#fff" stroke="#c6c6c6" stroke-width="1"/></svg><div style="left:147.40px;top:275.60px;width:10.50px;height:10.50px;border:1px solid #c2c2c2;box-sizing:border-box;border-radius:1.5px;background:#fff"></div><div style="left:147.40px;top:301.50px;width:10.50px;height:10.50px;border:1px solid #c2c2c2;box-sizing:border-box;border-radius:1.5px;background:#fff"></div><div style="left:257.70px;top:319.30px;width:89.10px;height:17.20px;background:#fff;border:1px solid #dcdcdc;box-sizing:border-box"></div><div style="left:331.70px;top:320.30px;width:1.00px;height:15.20px;background:#e0e0e0"></div><svg style="left:335.80px;top:324.00px" width="8" height="8" viewBox="0 0 8 8"><g fill="none" stroke="#888" stroke-width="0.9"><rect x="0.5" y="1.5" width="7" height="6"/><path d="M0.5 3.5 H7.5 M2.5 0 V2 M5.5 0 V2"/></g></svg><svg width="1002" height="347" font-family="Liberation Sans, sans-serif" xml:space="preserve" style="left:0;top:0;white-space:pre"><text transform="translate(61.80,13.20) scale(0.9346,1)" font-size="10.14" fill="#4d4a3a" font-weight="normal">Бухгалтерия предприятия &#160;(1С:Предприятие)</text><text transform="translate(943.10,12.00) scale(0.9346,1)" font-size="8.56" fill="#4d4a3a" font-weight="normal">Оксана В</text><text transform="translate(26.30,36.30) scale(0.9346,1)" font-size="9.95" fill="#4d4d4d" font-weight="normal">Начальная страница</text><text transform="translate(138.30,36.30) scale(0.9346,1)" font-size="10.04" fill="#4d4d4d" font-weight="normal">Настройки налогов и отчетов</text><text transform="translate(291.20,36.30) scale(0.9346,1)" font-size="10.04" fill="#4d4d4d" font-weight="normal">История изменения: Система налогообложения</text><text transform="translate(525.80,36.30) scale(0.9346,1)" font-size="10.04" fill="#4d4d4d" font-weight="normal">Система налогообложения</text><text transform="translate(34.90,61.40) scale(0.9346,1)" font-size="9.95" fill="#4d4d4d" font-weight="normal">Главное</text><text transform="translate(34.90,87.90) scale(0.9346,1)" font-size="9.95" fill="#4d4d4d" font-weight="normal">Руководителю</text><text transform="translate(34.90,114.40) scale(0.9346,1)" font-size="9.95" fill="#4d4d4d" font-weight="normal">Банк и касса</text><text transform="translate(34.90,140.90) scale(0.9346,1)" font-size="9.95" fill="#4d4d4d" font-weight="normal">Продажи</text><text transform="translate(34.90,167.40) scale(0.9346,1)" font-size="9.95" fill="#4d4d4d" font-weight="normal">Покупки</text><text transform="translate(34.90,193.90) scale(0.9346,1)" font-size="9.95" fill="#4d4d4d" font-weight="normal">Склад</text><text transform="translate(34.90,220.40) scale(0.9346,1)" font-size="9.95" fill="#4d4d4d" font-weight="normal">Производство</text><text transform="translate(34.90,246.90) scale(0.9346,1)" font-size="9.95" fill="#4d4d4d" font-weight="normal">ОС и НМА</text><text transform="translate(34.90,273.40) scale(0.9346,1)" font-size="9.95" fill="#4d4d4d" font-weight="normal">Зарплата и кадры</text><text transform="translate(34.90,299.90) scale(0.9346,1)" font-size="9.95" fill="#4d4d4d" font-weight="normal">Операции</text><text transform="translate(11.50,295.30) scale(0.9346,1)" font-size="6.21" fill="#4a4a4a" font-weight="bold">Дт</text><text transform="translate(16.50,301.80) scale(0.9346,1)" font-size="5.99" fill="#4a4a4a" font-weight="bold">Кт</text><text transform="translate(34.90,326.40) scale(0.9346,1)" font-size="9.95" fill="#4d4d4d" font-weight="normal">Отчеты</text><text transform="translate(229.90,64.80) scale(0.9804,1)" font-size="14.14" fill="#151515" font-weight="normal" stroke="#151515" stroke-width="0.35">Система налогообложения</text><text transform="translate(155.80,97.20) scale(0.9346,1)" font-size="10.43" fill="#333" font-weight="bold">Записать и закрыть</text><text transform="translate(279.80,97.20) scale(0.9346,1)" font-size="9.95" fill="#505050" font-weight="normal">Записать</text><text transform="translate(956.60,98.00) scale(0.9346,1)" font-size="10.17" fill="#505050" font-weight="normal">Еще</text><text transform="translate(147.00,130.30) scale(0.9346,1)" font-size="9.95" fill="#4d4d4d" font-weight="normal">Организация:</text><text transform="translate(226.20,130.30) scale(0.9346,1)" font-size="10.17" fill="#484848" font-weight="normal">Акцент ООО</text><text transform="translate(147.00,155.20) scale(0.9346,1)" font-size="9.95" fill="#4d4d4d" font-weight="normal">Применяется с:</text><text transform="translate(226.20,155.40) scale(0.9346,1)" font-size="10.17" fill="#484848" font-weight="normal">Январь 2021 г.</text><text transform="translate(337.80,155.40) scale(0.9346,1)" font-size="7.49" fill="#777" font-weight="normal">...</text><text transform="translate(146.70,183.40) scale(0.9346,1)" font-size="10.17" fill="#4d4d4d" font-weight="normal">Основная система налогообложения:</text><text transform="translate(163.00,198.40) scale(0.9346,1)" font-size="10.27" fill="#484848" font-weight="normal">Упрощенная (доходы)</text><text transform="translate(163.00,214.90) scale(0.9346,1)" font-size="10.27" fill="#484848" font-weight="normal">Упрощенная (доходы минус расходы)</text><text transform="translate(163.00,231.10) scale(0.9346,1)" font-size="10.27" fill="#484848" font-weight="normal">Общая</text><text transform="translate(146.70,256.80) scale(0.9346,1)" font-size="10.17" fill="#4d4d4d" font-weight="normal">Налоговые режимы, применяемые совместно</text><text transform="translate(146.70,268.10) scale(0.9346,1)" font-size="10.17" fill="#4d4d4d" font-weight="normal">с основной системой налогообложения:</text><text transform="translate(163.00,283.70) scale(0.9346,1)" font-size="10.27" fill="#484848" font-weight="normal">Торговый сбор</text><text transform="translate(234.60,284.00) scale(0.9346,1)" font-size="10.70" fill="#2f8ad8" font-weight="bold">?</text><text transform="translate(163.00,309.30) scale(0.9346,1)" font-size="10.27" fill="#484848" font-weight="normal">До перехода на УСН применялся общий налоговый режим</text><text transform="translate(433.10,309.60) scale(0.9346,1)" font-size="10.70" fill="#2f8ad8" font-weight="bold">?</text><text transform="translate(146.70,331.20) scale(0.9346,1)" font-size="10.17" fill="#b0b0b0" font-weight="normal">Дата перехода на УСН:</text><text transform="translate(267.30,331.00) scale(0.9346,1)" font-size="9.63" fill="#c0c0c0" font-weight="normal">. &#160; .</text></svg><div style="left:0;top:0;width:1002px;height:347px;box-sizing:border-box;border-style:solid;border-color:#858585;border-width:2px 2px 3px 2px"></div></div>
<svg style="left:0;top:0" width="1024" height="873" viewBox="0 0 1024 873"><rect x="289.3" y="144.1" width="106.3" height="24.8" rx="17" ry="12.4" fill="none" stroke="#e5782a" stroke-width="1.7"/><path d="M389 166.3 C394.8 166.6 410.4 166.7 423.5 167.9 C436.6 169.1 457.1 170.7 467.5 173.7 C477.9 176.7 481.2 181.1 485.8 185.7 C490.4 190.3 492.2 194.8 495 201.2 C497.8 207.6 500.1 216.1 502.3 224.2 C504.5 232.3 506.4 238.8 508 250 C509.6 261.2 510.8 277.5 511.7 291.5 C512.6 305.5 513.0 326.9 513.2 334" fill="none" stroke="#e5782a" stroke-width="1.8" stroke-dasharray="4.5 2.5"/><path d="M508.5 329.5 L513 335.5 L517.5 329.5" fill="none" stroke="#e5782a" stroke-width="1.5"/><rect x="151.7" y="419.05" width="66.3" height="28.05" rx="19" ry="14" fill="none" stroke="#e5782a" stroke-width="1.7"/><rect x="161.4" y="665.8" width="218.1" height="24.8" rx="21" ry="12.4" fill="none" stroke="#e5782a" stroke-width="1.7"/></svg>
</body></html>
